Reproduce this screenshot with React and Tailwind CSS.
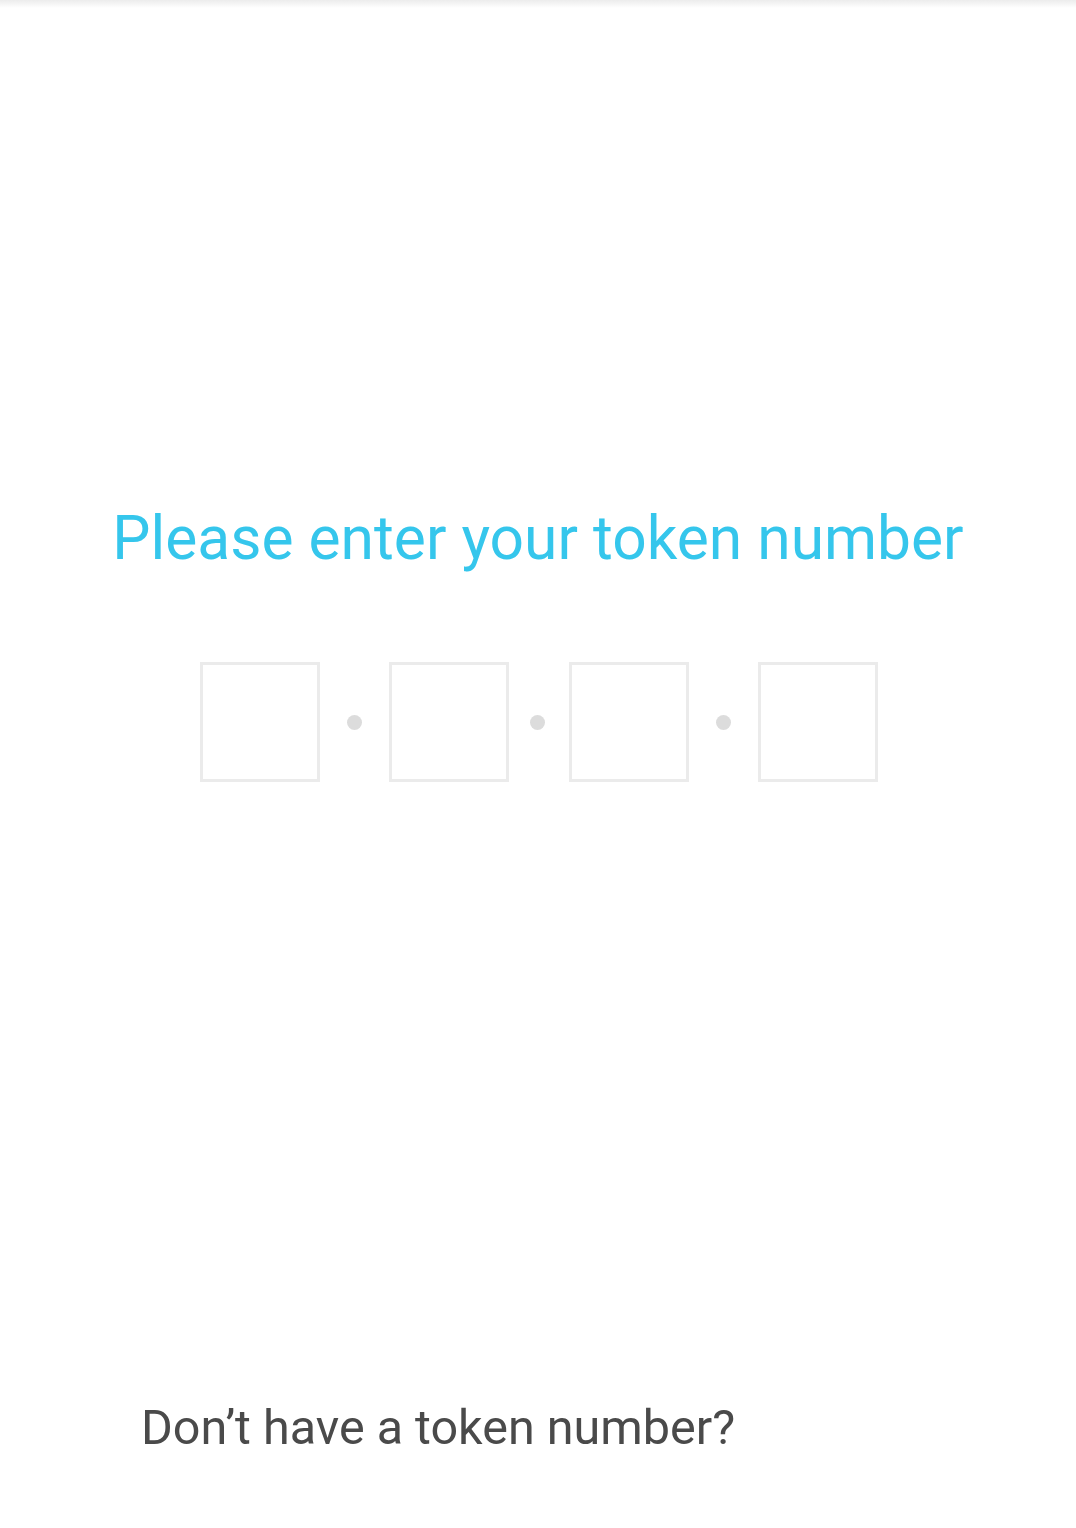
export default function App() {
  const Box = () => <div className="w-[120px] h-[120px] border-[3px] border-[#ebebeb] bg-white" />;
  return (
    <div className="relative w-[1076px] h-[1528px] bg-white overflow-hidden" style={{ fontFamily: "Roboto, 'Noto Sans', sans-serif" }}>
      <div className="absolute top-0 left-0 right-0 h-[8px] bg-gradient-to-b from-[#ececec] to-white" />
      <div className="flex flex-col items-center pt-[499px]">
        <h1 className="text-[60.5px] leading-[80px] text-[#35c6ec] font-normal">Please enter your token number</h1>
        <div className="flex mt-[83px] ml-[2px]">
          <Box />
          <div className="w-[69px] flex items-center pl-[27px]"><div className="w-[15px] h-[15px] rounded-full bg-[#dcdcdc]" /></div>
          <Box />
          <div className="w-[60px] flex items-center pl-[21px]"><div className="w-[15px] h-[15px] rounded-full bg-[#dcdcdc]" /></div>
          <Box />
          <div className="w-[69px] flex items-center pl-[27px]"><div className="w-[15px] h-[15px] rounded-full bg-[#dcdcdc]" /></div>
          <Box />
        </div>
      </div>
      <div className="absolute left-[141px] top-[1398px] text-[48.5px] leading-[60px] text-[#4a4a4a]">Don’t have a token number?</div>
    </div>
  );
}
